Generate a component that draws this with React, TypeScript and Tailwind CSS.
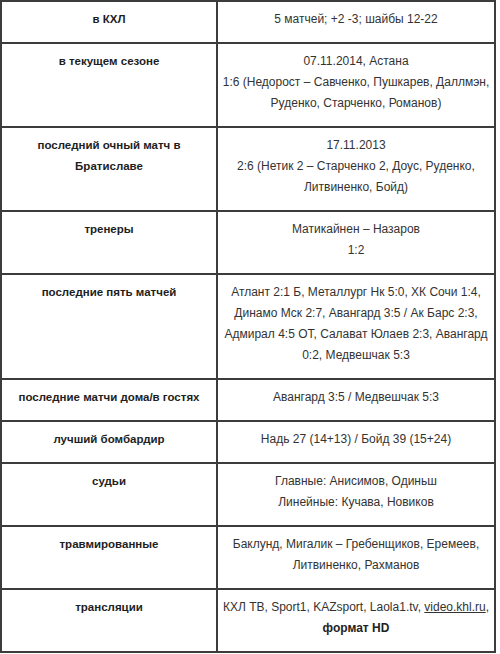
const rows: { label: string[]; value: React.ReactNode[] }[] = [
  { label: ['в КХЛ'], value: ['5 матчей; +2 -3; шайбы 12-22'] },
  {
    label: ['в текущем сезоне'],
    value: [
      '07.11.2014, Астана',
      '1:6 (Недорост – Савченко, Пушкарев, Даллмэн,',
      'Руденко, Старченко, Романов)',
    ],
  },
  {
    label: ['последний очный матч в', 'Братиславе'],
    value: ['17.11.2013', '2:6 (Нетик 2 – Старченко 2, Доус, Руденко,', 'Литвиненко, Бойд)'],
  },
  { label: ['тренеры'], value: ['Матикайнен – Назаров', '1:2'] },
  {
    label: ['последние пять матчей'],
    value: [
      'Атлант 2:1 Б, Металлург Нк 5:0, ХК Сочи 1:4,',
      'Динамо Мск 2:7, Авангард 3:5 / Ак Барс 2:3,',
      'Адмирал 4:5 ОТ, Салават Юлаев 2:3, Авангард',
      '0:2, Медвешчак 5:3',
    ],
  },
  { label: ['последние матчи дома/в гостях'], value: ['Авангард 3:5 / Медвешчак 5:3'] },
  { label: ['лучший бомбардир'], value: ['Надь 27 (14+13) / Бойд 39 (15+24)'] },
  { label: ['судьи'], value: ['Главные: Анисимов, Одиньш', 'Линейные: Кучава, Новиков'] },
  {
    label: ['травмированные'],
    value: ['Баклунд, Мигалик – Гребенщиков, Еремеев,', 'Литвиненко, Рахманов'],
  },
  {
    label: ['трансляции'],
    value: [
      <>
        КХЛ ТВ, Sport1, KAZsport, Laola1.tv, <span className="underline">video.khl.ru</span>,
      </>,
      <span className="font-bold text-[#222]">формат HD</span>,
    ],
  },
];

export default function App() {
  return (
    <div className="bg-white w-[500px] h-[654px]" style={{ fontFamily: '"Liberation Sans", Arial, sans-serif' }}>
      <table className="w-[496px] border-collapse border-2 border-[#3c3c3c] text-[12px] leading-[21px]">
        <tbody>
          {rows.map((r, i) => (
            <tr key={i}>
              <td className="w-[216px] border-2 border-[#3c3c3c] align-top text-center pt-[7px] pb-[12px] px-2 font-bold text-[11.5px] text-[#1e1e1e]">
                {r.label.map((l, j) => (
                  <div key={j} className="whitespace-nowrap">{l}</div>
                ))}
              </td>
              <td className="border-2 border-[#3c3c3c] align-top text-center pt-[7px] pb-[12px] px-1 text-[#333]">
                {r.value.map((v, j) => (
                  <div key={j} className="whitespace-nowrap">{v}</div>
                ))}
              </td>
            </tr>
          ))}
        </tbody>
      </table>
    </div>
  );
}
